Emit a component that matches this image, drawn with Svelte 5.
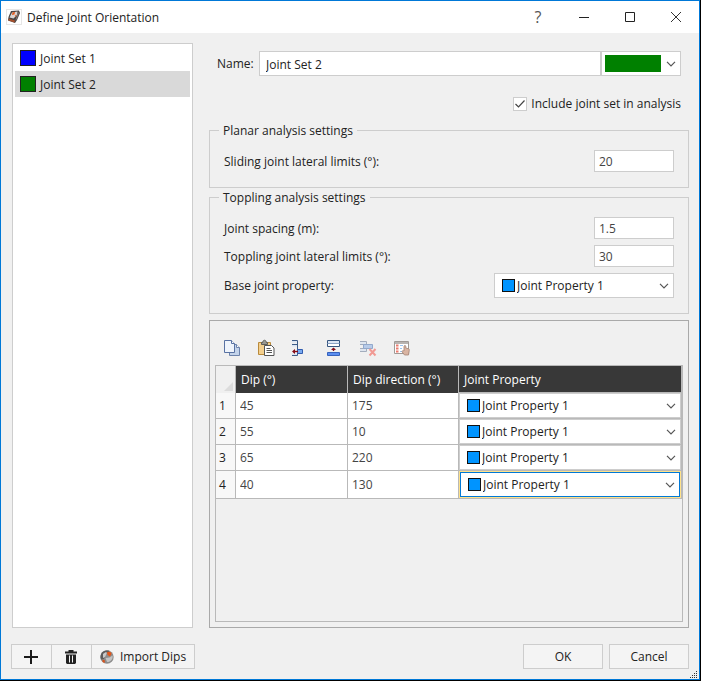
<script>
  const jointSets = [
    { name: 'Joint Set 1', color: '#0000ff' },
    { name: 'Joint Set 2', color: '#008000' }
  ];
  let selected = $state(1);
  let name = $state('Joint Set 2');
  let include = $state(true);
  let sliding = $state('20');
  let spacing = $state('1.5');
  let toppling = $state('30');
  let rows = $state([
    { dip: '45', direction: '175' },
    { dip: '55', direction: '10' },
    { dip: '65', direction: '220' },
    { dip: '40', direction: '130' }
  ]);
</script>

{#snippet chevron()}
  <svg class="chevron" width="10" height="6" viewBox="0 0 10 6" aria-hidden="true">
    <path d="M1 .8 5 4.8 9 .8" fill="none" stroke="#555" stroke-width="1.2" />
  </svg>
{/snippet}

{#snippet propertySelect(id, label)}
  <select {id} aria-label={label}>
    <option>Joint Property 1</option>
  </select>
  <span class="swatch"></span>
  {@render chevron()}
{/snippet}

<div class="window">
  <header>
    <svg class="app-icon" width="16" height="16" viewBox="0 0 16 16" aria-hidden="true">
      <rect x=".5" y=".5" width="15" height="15" fill="#fff" stroke="#e6e6e6" />
      <path d="M5 2 13 1.5 14 4 11 11 9 14 2 11.5 2.5 8z" fill="#4a4542" />
      <path d="M6 3.5 11.5 2.5 11 6 7.5 9.5 3.5 8.5z" fill="#d9d5d2" />
      <path d="M6.5 3.5 9 3 8.5 5.5 6 6zM8.8 6.8 10.5 5.5 9.8 8z" fill="#e35a1c" />
      <path d="M2.5 9.5 9 11.5 8.5 13.5 2.5 11.5z" fill="#a8502c" />
      <path d="M11.5 4 13.3 3 11 9.5 9.3 12z" fill="#7b7571" />
    </svg>
    <h1>Define Joint Orientation</h1>
    <button class="help" aria-label="Help">?</button>
    <button aria-label="Minimize">
      <svg width="10" height="10" viewBox="0 0 10 10"><path d="M0 5.5h10" stroke="#222" /></svg>
    </button>
    <button aria-label="Maximize">
      <svg width="10" height="10" viewBox="0 0 10 10"><path d="M.5.5h9v9h-9z" fill="none" stroke="#222" /></svg>
    </button>
    <button aria-label="Close">
      <svg width="10" height="10" viewBox="0 0 10 10"><path d="M0 0 10 10M10 0 0 10" stroke="#333" /></svg>
    </button>
  </header>

  <main>
    <ul class="sets">
      {#each jointSets as set, i}
        <li>
          <button class:active={selected === i} onclick={() => (selected = i)}>
            <span class="set-color" style:background={set.color}></span>{set.name}
          </button>
        </li>
      {/each}
    </ul>

    <section class="details">
      <div class="name-row">
        <label for="name">Name:</label>
        <input id="name" type="text" bind:value={name} />
        <div class="combo color-combo">
          <select aria-label="Joint set color"><option aria-label="Green"></option></select>
          <span class="color-fill"></span>
          {@render chevron()}
        </div>
      </div>

      <div class="include-row">
        <input id="include" type="checkbox" bind:checked={include} />
        <label for="include">Include joint set in analysis</label>
      </div>

      <fieldset>
        <legend>Planar analysis settings</legend>
        <div class="field">
          <label for="sliding">Sliding joint lateral limits (°):</label>
          <input id="sliding" type="text" bind:value={sliding} />
        </div>
      </fieldset>

      <fieldset>
        <legend>Toppling analysis settings</legend>
        <div class="field">
          <label for="spacing">Joint spacing (m):</label>
          <input id="spacing" type="text" bind:value={spacing} />
        </div>
        <div class="field">
          <label for="toppling">Toppling joint lateral limits (°):</label>
          <input id="toppling" type="text" bind:value={toppling} />
        </div>
        <div class="field">
          <label for="base">Base joint property:</label>
          <div class="combo base-combo">{@render propertySelect('base', null)}</div>
        </div>
      </fieldset>

      <div class="panel">
        <div class="toolbar">
          <button aria-label="Copy">
            <svg width="18" height="18" viewBox="0 0 18 18">
              <path d="M6.5 5.5h7l3 3v8h-10z" fill="#c3d3ea" stroke="#6d83ab" />
              <path d="M13.500 5.500v3h3" fill="#fff" stroke="#6d83ab" />
              <path d="M1.500 1.500h7l3 3v9h-10z" fill="#eff4fb" stroke="#5872a3" />
              <path d="M8.500 1.500v3h3" fill="#fff" stroke="#5872a3" />
            </svg>
          </button>
          <button aria-label="Paste">
            <svg width="18" height="18" viewBox="0 0 18 18">
              <path d="M1.500 3.500h12v12h-12z" fill="#f3cf8d" stroke="#b98a3b" />
              <path d="M4.500 5.500v-2h1.200c0-3 3.600-3 3.600 0h1.200v2z" fill="#9a9a94" stroke="#5d5d58" />
              <path d="M7.500 6.500h7l2.500 2.500v7.500H7.500z" fill="#fff" stroke="#555" />
              <path d="M9.500 9.500h4M9.500 11.500h5.500M9.500 13.500h5.500" stroke="#555" />
            </svg>
          </button>
          <button aria-label="Insert cell">
            <svg width="18" height="18" viewBox="0 0 18 18">
              <path d="M1 2.500h5M1 6.500h5M1 15.500h5" stroke="#dbe5f3" stroke-width="2" />
              <path d="M1 1.500h5.500v15H1M1 5.500h5.500" fill="none" stroke="#3e5c86" />
              <path d="M6.500 10.500h5v4h-5z" fill="#79aaf0" stroke="#315caf" />
              <path d="M2 12.500h5" stroke="#850d18" stroke-width="1.400" />
              <path d="M4 10 1 12.500 4 15z" fill="#850d18" />
            </svg>
          </button>
          <button aria-label="Insert row above">
            <svg width="18" height="18" viewBox="0 0 18 18">
              <path d="M2.500 1.500h12v6h-12z" fill="#fff" stroke="#35547f" />
              <path d="M3 3h11" stroke="#dbe5f3" stroke-width="2" />
              <path d="M2.500 4.500h12" stroke="#8aa2c5" />
              <path d="M2.500 13.500h12v3h-12z" fill="#5b8ef0" stroke="#3662bd" />
              <path d="M8.500 12v-3" stroke="#850d18" stroke-width="1.400" />
              <path d="M6 11 8.500 8.500 11 11z" fill="#850d18" />
            </svg>
          </button>
          <button aria-label="Delete row">
            <svg width="18" height="18" viewBox="0 0 18 18">
              <path d="M1 4h6M1 11h6" stroke="#dfe6ef" stroke-width="2" />
              <path d="M1 2.500h6.500v3M1 12.500h6.500v-3M1 5.500h4M1 9.500h4" fill="none" stroke="#a3adbd" />
              <path d="M4.500 5.500h9v4h-9z" fill="#b7cbe9" stroke="#92a9cc" />
              <path d="M10.500 10 16.500 16.500M16.500 10 10.500 16.500" stroke="#f19a94" stroke-width="2" />
            </svg>
          </button>
          <button aria-label="Properties">
            <svg width="18" height="18" viewBox="0 0 18 18">
              <path d="M1.500 2.500h14v12h-14z" fill="#fff" stroke="#a09a96" />
              <path d="M2 4h13" stroke="#b8b4b1" stroke-width="2" />
              <path d="M3 6.500h2.500M3 9.500h2.500M3 12.500h2.500" stroke="#ec7a6d" stroke-width="2" />
              <path d="M7 6.500h3M7 9.500h2M7 12.500h2" stroke="#9dc4ee" />
              <path d="M11 12V7.500c0-1.400 1.800-1.400 1.800 0V9l2.800.8c.8.3.8 1 .6 2L15.500 16h-4l-2.300-3c-.6-1 .6-1.800 1.800-1z" fill="#d9b4a2" stroke="#a38373" stroke-width=".8" />
            </svg>
          </button>
        </div>

        <div class="frame">
          <table>
            <thead>
              <tr>
                <td class="corner"><svg width="9" height="9" viewBox="0 0 9 9" aria-hidden="true"><path d="M9 0v9H0z" fill="#dcdcdc" /></svg></td>
                <th class="dip" scope="col">Dip (°)</th>
                <th class="direction" scope="col">Dip direction (°)</th>
                <th scope="col">Joint Property</th>
              </tr>
            </thead>
            <tbody>
              {#each rows as row, i}
                <tr>
                  <th scope="row">{i + 1}</th>
                  <td><input type="text" aria-label="Dip, row {i + 1}" bind:value={row.dip} /></td>
                  <td><input type="text" aria-label="Dip direction, row {i + 1}" bind:value={row.direction} /></td>
                  <td class="property">
                    <div class="combo">{@render propertySelect(null, `Joint property, row ${i + 1}`)}</div>
                  </td>
                </tr>
              {/each}
            </tbody>
          </table>
        </div>
      </div>
    </section>
  </main>

  <footer>
    <div class="tools">
      <button class="square" aria-label="Add joint set">
        <svg width="14" height="14" viewBox="0 0 14 14"><path d="M7 0v14M0 7h14" stroke="#1a1a1a" stroke-width="2" /></svg>
      </button>
      <button class="square" aria-label="Delete joint set">
        <svg width="14" height="16" viewBox="0 0 14 16">
          <path d="M4.500 1h5v1.500H13v2H1v-2h3.500z" fill="#222" />
          <path d="M2 5.500h10V14l-1 1H3l-1-1z" fill="#222" />
          <path d="M5.500 6.500v7M8.500 6.500v7" stroke="#f3f3f3" />
        </svg>
      </button>
      <button class="import">
        <svg width="14" height="14" viewBox="0 0 14 14" aria-hidden="true">
          <circle cx="7" cy="7" r="6.700" fill="#8d8d8d" />
          <path d="M2 2.500C4 .5 8 0 9.500 1L5 5.500 4 9 1 9.500C0 7 .5 4 2 2.500z" fill="#5d5d5d" />
          <path d="M3 4C5 2 7 2 7 3L5 7 3 8z" fill="#c9c9c9" />
          <path d="M7 2.500C9 1 11.500 2 11.500 4L10 6.500 7.500 5z" fill="#e2571b" />
          <path d="M5.500 8 9.500 7.500 12.500 5.500C13.500 9 10 12.500 7 12z" fill="#c4c4c4" />
          <path d="M2.500 9.500 5 10.500 4.500 13 2.500 12z" fill="#d9531c" />
        </svg>
        Import Dips
      </button>
    </div>
    <div class="actions">
      <button>OK</button>
      <button>Cancel</button>
    </div>
    <svg class="grip" width="8" height="8" viewBox="0 0 8 8" aria-hidden="true">
      <path d="M6 0h1v1H6zM4 2h1v1H4zM6 2h1v1H6zM2 4h1v1H2zM4 4h1v1H4zM6 4h1v1H6zM0 6h1v1H0zM2 6h1v1H2zM4 6h1v1H4zM6 6h1v1H6z" fill="#333" />
    </svg>
  </footer>
</div>

<style>
  :global(body) {
    background: #000;
  }

  .window,
  .window * {
    box-sizing: border-box;
  }

  .window {
    display: flex;
    flex-direction: column;
    min-height: calc(100vh - 1px);
    margin: 0 1px 1px 0;
    border: 1px solid #0078d7;
    background: #f0f0f0;
    color: #222;
    font: 12px/17px 'Open Sans', 'Noto Sans', sans-serif;
    position: relative;
  }

  button,
  input,
  select {
    margin: 0;
    font: inherit;
    color: inherit;
    border-radius: 0;
  }

  button {
    display: flex;
    align-items: center;
    justify-content: center;
    padding: 0;
    border: 0;
    background: none;
  }

  header {
    display: flex;
    align-items: center;
    height: 32px;
    padding-left: 5px;
    background: #fff;
  }

  h1 {
    flex: 1;
    margin: 0 0 0 5px;
    font-size: 12px;
    font-weight: 400;
  }

  header button {
    width: 46px;
    height: 32px;
  }

  header .help {
    font-size: 16px;
    color: #555;
  }

  main {
    flex: 1;
    display: grid;
    grid-template-columns: 181px minmax(0, 1fr);
    gap: 16px;
    padding: 10px 10px 0 11px;
  }

  .sets {
    margin: 0;
    padding: 1px 2px;
    border: 1px solid #cdcdcd;
    background: #fff;
    list-style: none;
  }

  .sets button {
    justify-content: flex-start;
    gap: 4px;
    width: 100%;
    height: 26px;
    padding-left: 5px;
  }

  .sets .active {
    background: #d9d9d9;
  }

  .set-color {
    width: 16px;
    height: 16px;
    border: 1px solid #222;
  }

  .details {
    display: flex;
    flex-direction: column;
  }

  .name-row {
    display: flex;
    align-items: center;
    padding: 8px 8px 0;
  }

  .name-row label {
    width: 42px;
  }

  input[type='text'] {
    min-width: 0;
    height: 22px;
    padding: 0 4px;
    border: 1px solid #cdcdcd;
    background: #fff;
    color: #444;
    outline: 0;
  }

  .name-row input[type='text'] {
    flex: 1;
    height: 25px;
    padding: 1px 6px 0;
    color: #222;
  }

  .combo {
    display: grid;
    align-items: center;
    height: 25px;
    border: 1px solid #cdcdcd;
    background: #fff;
  }

  .combo > :global(*) {
    grid-area: 1 / 1;
  }

  select {
    appearance: none;
    width: 100%;
    height: 100%;
    padding: 0 20px 0 22px;
    border: 0;
    background: none;
    outline: 0;
  }

  .swatch {
    width: 13px;
    height: 13px;
    margin-left: 7px;
    border: 1px solid #111;
    background: #0094ff;
    pointer-events: none;
  }

  .chevron {
    justify-self: end;
    margin-right: 4px;
    pointer-events: none;
  }

  .color-combo {
    width: 80px;
  }

  .color-fill {
    height: 17px;
    margin: 0 19px 0 3px;
    background: #008000;
    pointer-events: none;
  }

  .include-row {
    display: flex;
    align-items: center;
    justify-content: flex-end;
    gap: 4px;
    padding: 19px 8px 10px;
  }

  input[type='checkbox'] {
    appearance: none;
    width: 14px;
    height: 14px;
    border: 1px solid #cdcdcd;
    background: #fff;
  }

  input[type='checkbox']:checked {
    background: #fff
      url("data:image/svg+xml,%3Csvg xmlns='http://www.w3.org/2000/svg' viewBox='0 0 12 12'%3E%3Cpath d='M1.500 6 4.500 9 10.500 2.500' fill='none' stroke='%23444' stroke-width='1.200'/%3E%3C/svg%3E");
  }

  fieldset {
    display: flex;
    flex-direction: column;
    gap: 6px;
    min-width: 0;
    margin: 0 0 1px;
    padding: 11px 14px 15px;
    border: 1px solid #cdcdcd;
  }

  legend {
    margin-left: -5px;
    padding: 0 4px;
  }

  .field {
    display: flex;
    align-items: center;
    justify-content: space-between;
  }

  .field input[type='text'] {
    width: 80px;
  }

  .base-combo {
    width: 180px;
  }

  .panel {
    flex: 1;
    display: flex;
    flex-direction: column;
    margin-top: 5px;
    padding: 5px;
    border: 1px solid #a9a9a9;
  }

  .toolbar {
    display: flex;
    padding-top: 5px;
  }

  .toolbar button {
    width: 34px;
    height: 34px;
  }

  .frame {
    flex: 1;
    border: 1px solid #b9b9b9;
  }

  table {
    width: 100%;
    table-layout: fixed;
    border-spacing: 0;
  }

  td,
  th {
    height: 26px;
    padding: 0;
    border-right: 1px solid #b9b9b9;
    border-bottom: 1px solid #b9b9b9;
    background: #fff;
    font-weight: 400;
    text-align: left;
  }

  thead th {
    height: 27px;
    padding-left: 5px;
    border-bottom: 0;
    background: #383838;
    color: #fff;
  }

  thead th:last-child {
    border-bottom: 1px solid #b9b9b9;
  }

  .dip {
    width: 112px;
  }

  .direction {
    width: 111px;
  }

  .corner {
    width: 20px;
    padding: 0 2px 2px 0;
    border-bottom: 0;
    background: #f0f0f0;
    vertical-align: bottom;
  }

  .corner svg {
    display: block;
    margin-left: auto;
  }

  tbody th {
    padding-left: 3px;
    background: #f8f8f8;
  }

  td input[type='text'] {
    display: block;
    width: 100%;
    border: 0;
  }

  td .combo {
    height: 25px;
  }

  tbody tr:last-child td,
  tbody tr:last-child th {
    height: 28px;
  }

  tbody tr:last-child .property {
    padding: 1px;
    background: #ffe28a;
  }

  tbody tr:last-child .combo {
    border-color: #0078d7;
  }

  footer {
    display: flex;
    justify-content: space-between;
    padding: 16px 10px 10px;
  }

  .tools,
  .actions {
    display: flex;
  }

  .actions {
    gap: 6px;
  }

  footer button {
    height: 25px;
    border: 1px solid #cdcdcd;
    background: #f4f4f4;
  }

  .tools button + button {
    margin-left: -1px;
  }

  .square {
    width: 41px;
    padding-right: 1px;
  }

  .import {
    gap: 6px;
    padding: 0 8px;
  }

  .actions button {
    width: 80px;
  }

  .grip {
    position: absolute;
    right: 1px;
    bottom: 0;
  }
</style>
